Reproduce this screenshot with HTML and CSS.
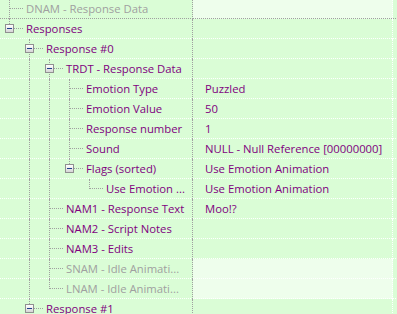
FILE: index.html
```html
<!DOCTYPE html>
<html lang="en">
<head>
    <meta charset="UTF-8">
    <title>Record View</title>
    <link rel="stylesheet" href="styles.css">
</head>
<body>
    <div class="tree">
        <div class="row focus">
            <div class="name off"><span class="g own tee"></span><span class="t">DNAM - Response Data</span></div>
            <div class="value off"></div>
            <div class="edge"></div>
        </div>
        <div class="row">
            <div class="name"><span class="g own box"><i class="btn"></i></span><span class="t">Responses</span></div>
            <div class="value"></div>
            <div class="edge"></div>
        </div>
        <div class="row">
            <div class="name"><span class="g"></span><span class="g own box more"><i class="btn"></i></span><span class="t">Response #0</span></div>
            <div class="value"></div>
            <div class="edge"></div>
        </div>
        <div class="row">
            <div class="name"><span class="g"></span><span class="g pipe"></span><span class="g own box more"><i class="btn"></i></span><span class="t">TRDT - Response Data</span></div>
            <div class="value"></div>
            <div class="edge"></div>
        </div>
        <div class="row">
            <div class="name"><span class="g"></span><span class="g pipe"></span><span class="g pipe"></span><span class="g own tee"></span><span class="t">Emotion Type</span></div>
            <div class="value">Puzzled</div>
            <div class="edge"></div>
        </div>
        <div class="row">
            <div class="name"><span class="g"></span><span class="g pipe"></span><span class="g pipe"></span><span class="g own tee"></span><span class="t">Emotion Value</span></div>
            <div class="value">50</div>
            <div class="edge"></div>
        </div>
        <div class="row">
            <div class="name"><span class="g"></span><span class="g pipe"></span><span class="g pipe"></span><span class="g own tee"></span><span class="t">Response number</span></div>
            <div class="value">1</div>
            <div class="edge"></div>
        </div>
        <div class="row">
            <div class="name"><span class="g"></span><span class="g pipe"></span><span class="g pipe"></span><span class="g own tee"></span><span class="t">Sound</span></div>
            <div class="value">NULL - Null Reference [00000000]</div>
            <div class="edge"></div>
        </div>
        <div class="row">
            <div class="name"><span class="g"></span><span class="g pipe"></span><span class="g pipe"></span><span class="g own box"><i class="btn"></i></span><span class="t">Flags (sorted)</span></div>
            <div class="value">Use Emotion Animation</div>
            <div class="edge"></div>
        </div>
        <div class="row">
            <div class="name"><span class="g"></span><span class="g pipe"></span><span class="g pipe"></span><span class="g"></span><span class="g own end"></span><span class="t">Use Emotion ...</span></div>
            <div class="value">Use Emotion Animation</div>
            <div class="edge"></div>
        </div>
        <div class="row">
            <div class="name"><span class="g"></span><span class="g pipe"></span><span class="g own tee"></span><span class="t">NAM1 - Response Text</span></div>
            <div class="value">Moo!?</div>
            <div class="edge"></div>
        </div>
        <div class="row">
            <div class="name"><span class="g"></span><span class="g pipe"></span><span class="g own tee"></span><span class="t">NAM2 - Script Notes</span></div>
            <div class="value"></div>
            <div class="edge"></div>
        </div>
        <div class="row">
            <div class="name"><span class="g"></span><span class="g pipe"></span><span class="g own tee"></span><span class="t">NAM3 - Edits</span></div>
            <div class="value"></div>
            <div class="edge"></div>
        </div>
        <div class="row">
            <div class="name off"><span class="g"></span><span class="g pipe"></span><span class="g own tee"></span><span class="t">SNAM - Idle Animati...</span></div>
            <div class="value off"></div>
            <div class="edge"></div>
        </div>
        <div class="row">
            <div class="name off"><span class="g"></span><span class="g pipe"></span><span class="g own end"></span><span class="t">LNAM - Idle Animati...</span></div>
            <div class="value off"></div>
            <div class="edge"></div>
        </div>
        <div class="row">
            <div class="name"><span class="g"></span><span class="g own box"><i class="btn"></i></span><span class="t">Response #1</span></div>
            <div class="value"></div>
            <div class="edge"></div>
        </div>
    </div>
</body>
</html>
```
FILE: styles.css
```css
* {
    box-sizing: border-box;
}

body {
    margin: 0;
    background-color: #dafdd6;
    font-family: "Open Sans", "Noto Sans", sans-serif;
    font-size: 11.3px;
    color: #800080;
    overflow: hidden;
}

.tree {
    margin-top: -1px;
}

.row {
    display: flex;
    height: 20px;
}

/* each cell paints its own dotted separator at the bottom */
.row > div {
    background-color: #dafdd6;
    background-image: linear-gradient(to right, #fff 50%, transparent 50%);
    background-size: 2px 1px;
    background-repeat: repeat-x;
    background-position: 0 100%;
}

.row.focus > div {
    background-image: linear-gradient(to right, #a0a0a0 50%, transparent 50%);
}

.name {
    display: flex;
    width: 193px;
    flex: none;
    border-right: 1px dotted #a0a0a0;
    white-space: nowrap;
    overflow: hidden;
}

.value {
    width: 200px;
    flex: none;
    padding-left: 12px;
    line-height: 19px;
    border-right: 1px dotted #fff;
    white-space: nowrap;
    overflow: hidden;
}

.edge {
    flex: 1;
}

.value.off {
    background-color: #eefeec;
}

.name.off {
    color: #a0a0a0;
}

.t {
    line-height: 19px;
}

/* tree guides */
.g {
    position: relative;
    width: 20px;
    flex: none;
}

.g.own {
    width: 26px;
}

.g::before,
.g::after {
    position: absolute;
    content: none;
}

.pipe::before,
.tee::before,
.end::before,
.box::before {
    content: "";
    left: 9px;
    top: 0;
    bottom: 0;
    border-left: 1px dotted #a0a0a0;
}

.end::before {
    bottom: auto;
    height: 10px;
}

.box::before {
    bottom: auto;
    height: 5px;
}

.box.more::before {
    height: auto;
    bottom: 0;
}

.tee::after,
.end::after,
.box::after {
    content: "";
    left: 10px;
    top: 9px;
    width: 13px;
    border-top: 1px dotted #a0a0a0;
}

.box::after {
    left: 14px;
    width: 9px;
}

.btn {
    position: absolute;
    left: 5px;
    top: 5px;
    width: 9px;
    height: 9px;
    border: 1px solid #919191;
    background: linear-gradient(#fff, #d6d6d6);
    z-index: 1;
}

.btn::after {
    content: "";
    position: absolute;
    left: 1px;
    top: 3px;
    width: 5px;
    height: 1px;
    background-color: #1f3f8a;
}
```
